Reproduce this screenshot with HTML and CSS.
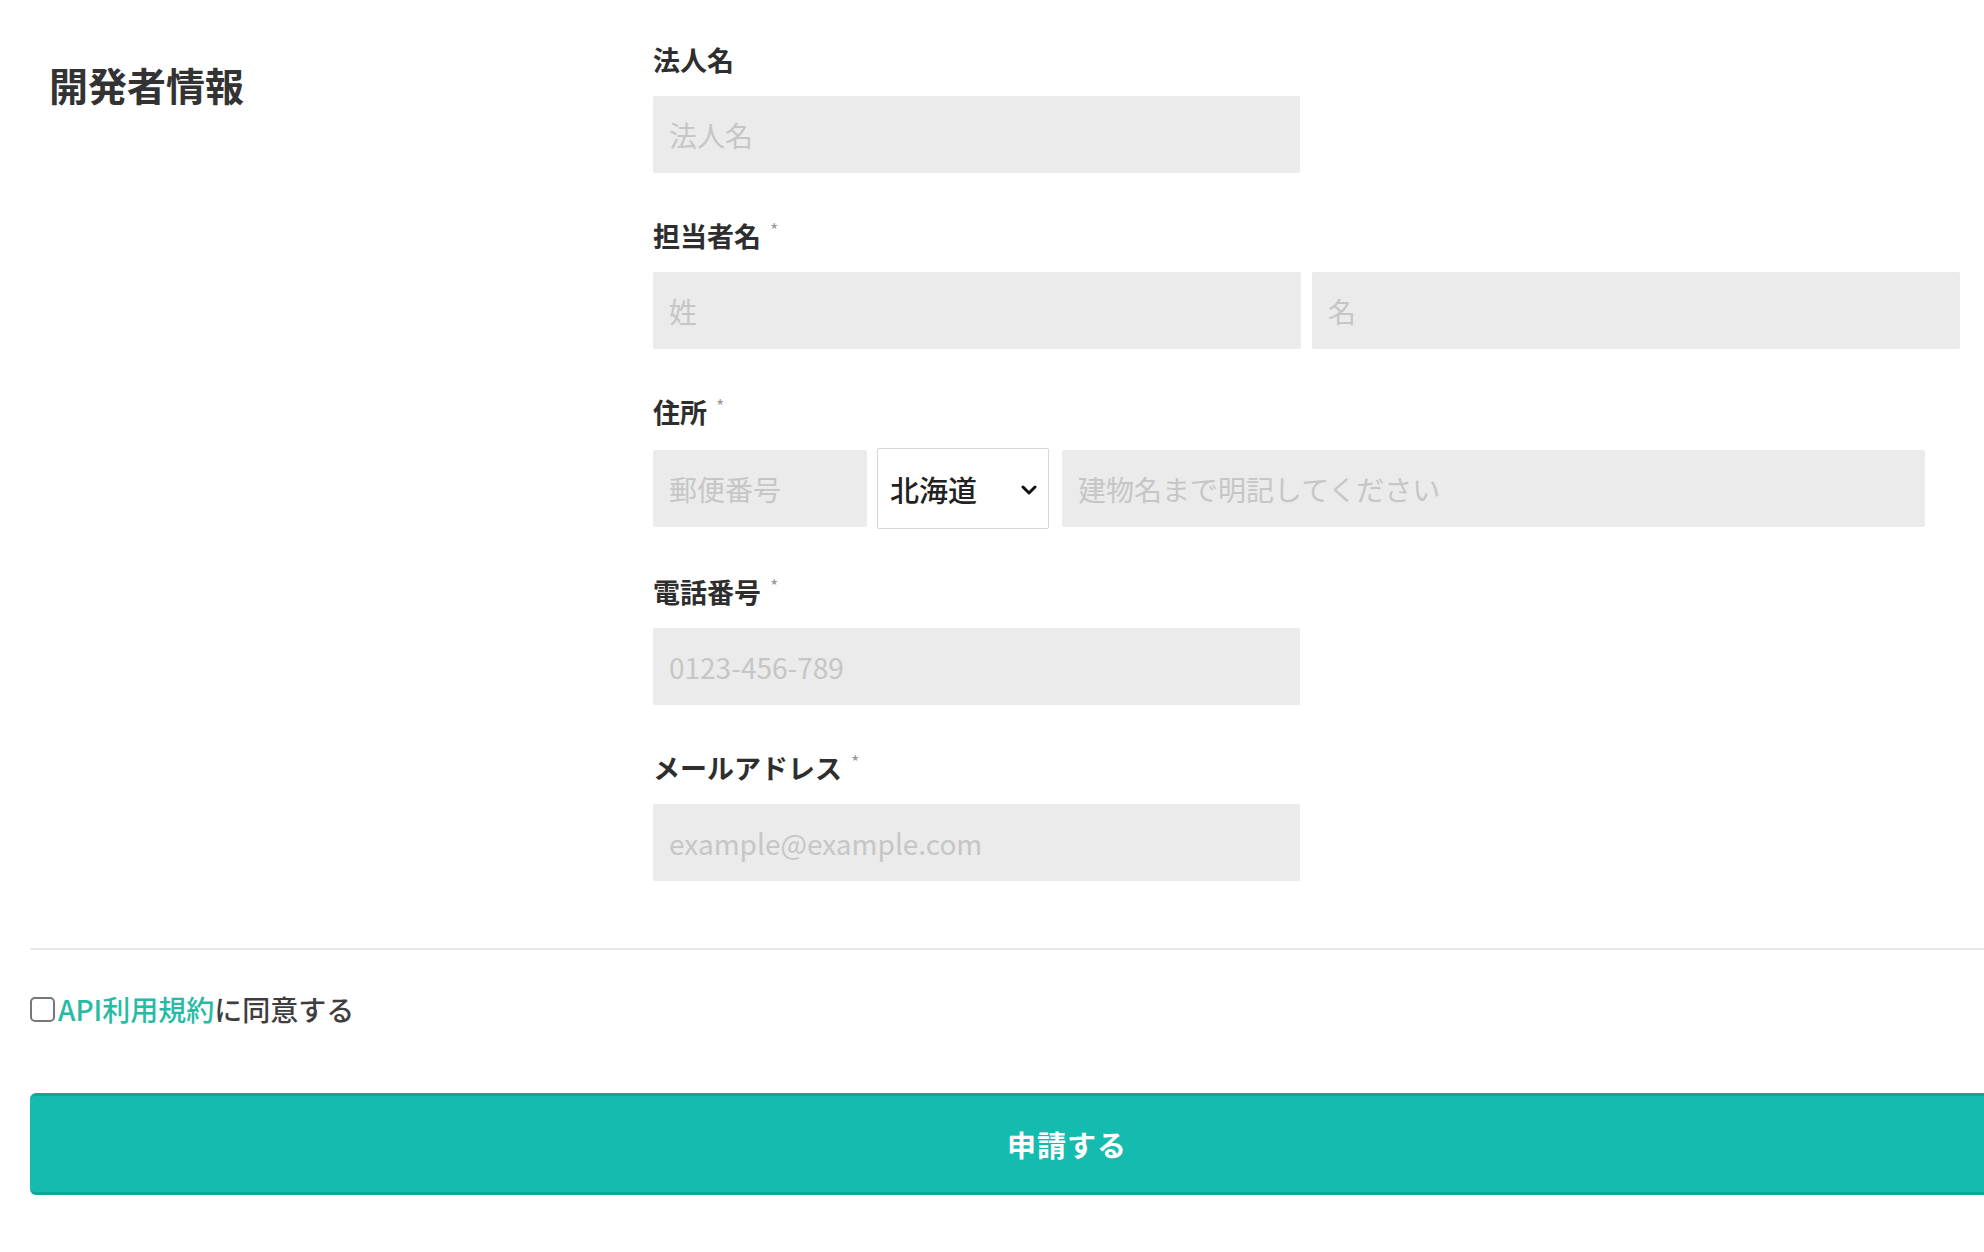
FILE: index.html
```html
<!DOCTYPE html>
<html lang="ja">
<head>
<meta charset="utf-8">
<title>開発者情報</title>
<link rel="stylesheet" href="styles.css">
</head>
<body>
<div class="page">
  <section class="section">
    <h2 class="section-title">開発者情報</h2>
    <div class="fields">
      <div class="field">
        <label class="field-label">法人名</label>
        <input class="input input-single" type="text" placeholder="法人名">
      </div>
      <div class="field">
        <label class="field-label">担当者名<span class="req">*</span></label>
        <div class="row row-name">
          <input class="input input-half" type="text" placeholder="姓">
          <input class="input input-half" type="text" placeholder="名">
        </div>
      </div>
      <div class="field field-address">
        <label class="field-label">住所<span class="req">*</span></label>
        <div class="row row-address">
          <input class="input input-zip" type="text" placeholder="郵便番号">
          <span class="select-wrap">
            <select class="select"><option>北海道</option></select>
            <svg class="chevron" viewBox="0 0 16 10" width="16" height="10"><path d="M2 2 L8 8 L14 2" fill="none" stroke="#111" stroke-width="3" stroke-linecap="round" stroke-linejoin="round"/></svg>
          </span>
          <input class="input input-street" type="text" placeholder="建物名まで明記してください">
        </div>
      </div>
      <div class="field">
        <label class="field-label">電話番号<span class="req">*</span></label>
        <input class="input input-single" type="text" placeholder="0123-456-789">
      </div>
      <div class="field">
        <label class="field-label">メールアドレス<span class="req">*</span></label>
        <input class="input input-single" type="text" placeholder="example@example.com">
      </div>
    </div>
  </section>
  <hr class="divider">
  <div class="agree">
    <input class="checkbox" type="checkbox" id="agree">
    <label for="agree" class="agree-text"><a class="agree-link" href="#">API利用規約</a>に同意する</label>
  </div>
  <button class="submit" type="button">申請する</button>
</div>
</body>
</html>
```

FILE: styles.css
```css
html, body {
  margin: 0;
  padding: 0;
  background: #ffffff;
  overflow: hidden;
}

body {
  font-family: "Noto Sans CJK JP", "Noto Sans", "Liberation Sans", sans-serif;
  color: #333333;
}

.page {
  width: 2074px;
  padding: 42px 0 0 30px;
}

.section {
  display: grid;
  grid-template-columns: 623px 1fr;
}

.section-title {
  margin: 0;
  padding: 17px 0 0 19px;
  font-size: 39px;
  line-height: 50px;
  font-weight: 700;
  color: #333333;
}

.fields {
  display: flex;
  flex-direction: column;
}

.field {
  display: flex;
  flex-direction: column;
  height: 176px;
}

.field-address {
  height: 180px;
}

.field-label {
  font-size: 27px;
  line-height: 36px;
  font-weight: 700;
  color: #2e2e2e;
  margin-bottom: 18px;
}

.req {
  font-size: 18px;
  font-weight: 400;
  color: #999999;
  vertical-align: top;
  line-height: 22px;
  margin-left: 9px;
}

.input {
  box-sizing: border-box;
  height: 77px;
  border: none;
  border-radius: 2px;
  background: #ebebeb;
  padding: 0 16px;
  font-family: "Noto Sans CJK JP", "Noto Sans", sans-serif;
  font-size: 28px;
  color: #333;
  outline: none;
}

.input::placeholder {
  color: #c6c6c6;
}

.input-single {
  width: 647px;
}

.row {
  display: flex;
  align-items: center;
}

.row-name {
  gap: 11px;
}

.input-half {
  width: 648px;
}

.row-address {
  gap: 10px;
}

.input-zip {
  width: 214px;
}

.select-wrap {
  position: relative;
  display: block;
  width: 172px;
  height: 81px;
}

.select {
  -webkit-appearance: none;
  appearance: none;
  box-sizing: border-box;
  width: 172px;
  height: 81px;
  background: #ffffff;
  border: 1px solid #d6d6d6;
  border-radius: 2px;
  padding: 0 12px;
  font-family: "Noto Sans CJK JP", sans-serif;
  font-size: 29px;
  font-weight: 500;
  color: #222;
}

.chevron {
  position: absolute;
  right: 12px;
  top: 37px;
  pointer-events: none;
}

.input-street {
  width: 863px;
  margin-left: 3px;
}

.divider {
  margin: 22px 0 0 0;
  border: none;
  height: 2px;
  background: #e8e8e8;
}

.agree {
  display: flex;
  align-items: center;
  height: 40px;
  margin-top: 39px;
}

.checkbox {
  -webkit-appearance: none;
  appearance: none;
  box-sizing: border-box;
  width: 25px;
  height: 25px;
  margin: 0 3px 0 0;
  border: 2px solid #777;
  border-radius: 5px;
  background: #fff;
}

.agree-text {
  font-size: 28px;
  line-height: 40px;
  font-weight: 500;
  color: #3e3e3e;
}

.agree-link {
  color: #27bba6;
  text-decoration: none;
}

.submit {
  display: block;
  box-sizing: border-box;
  width: 2074px;
  height: 102px;
  margin-top: 64px;
  border: none;
  border-top: 3px solid #0fa898;
  border-bottom: 3px solid #0fa898;
  border-radius: 6px;
  background: #13bcae;
  color: #ffffff;
  font-family: "Noto Sans CJK JP", sans-serif;
  font-size: 29px;
  font-weight: 700;
  letter-spacing: 1px;
}
```
